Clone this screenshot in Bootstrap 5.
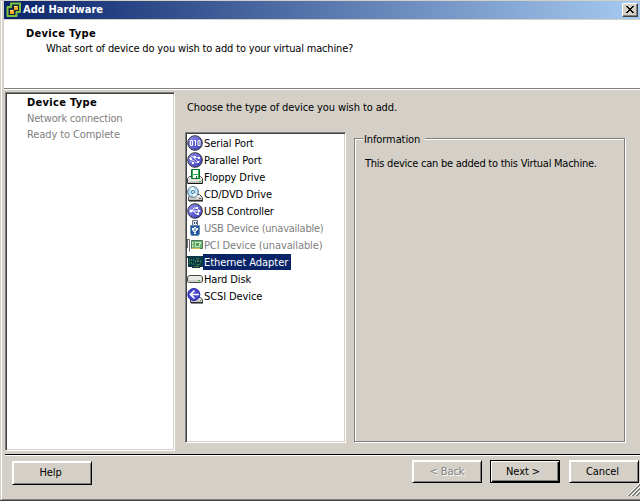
<!DOCTYPE html>
<html lang="en">
<head>
<meta charset="utf-8">
<title>Add Hardware</title>
<link href="https://cdn.jsdelivr.net/npm/bootstrap@5.3.0/dist/css/bootstrap.min.css" rel="stylesheet">
<style>
:root{--face:#d4d0c8}
body{width:640px;height:501px;overflow:hidden;background:var(--face);color:#000;font:11px/16px "DejaVu Sans Condensed","DejaVu Sans",sans-serif;font-stretch:condensed;letter-spacing:-.1px}
svg{display:block;flex:none}
.fit{white-space:pre}
.window{width:640px;height:501px;padding:1px 0 0 1px;border-bottom:1px solid #404040}
.window-inner{border-left:1px solid #fff;border-bottom:1px solid #808080;padding-left:2px;height:499px}
.titlebar{height:18px;background:linear-gradient(90deg,#0a246a,#a6caf0);color:#fff;padding:0 2px 0 2px}
.titlebar .bold{padding-left:1px;letter-spacing:.04px}
.bold{font-weight:700}
#head,#s1{letter-spacing:.32px}
#sub{letter-spacing:-.17px}
#s2{letter-spacing:-.2px}
#msg,#d6{letter-spacing:-.25px}
#d5{letter-spacing:-.17px}
.close-btn{width:16px;height:14px;padding:0;background:var(--face);border:1px solid;border-color:#fff #404040 #404040 #fff;box-shadow:inset -1px -1px #808080;border-radius:0}
.banner{height:69px;background:#fff;border-bottom:1px solid #808080;margin-top:1px;padding:6px 0 0 22px}
.sub{padding-left:20px;margin-top:-1px}
.main{height:365px;border-top:1px solid #fff;padding:2px 14px 0 1px}
.sunken{background:#fff;border:1px solid;border-color:#808080 #fff #fff #808080;box-shadow:inset 1px 1px #404040,inset -1px -1px var(--face)}
.steps{width:170px;height:359px;padding:2px 0 0 21px;color:#808080}
.content{margin-left:10px;padding-top:8px;width:441px}
.prompt{padding-left:2px;height:32px}
.devices{width:161px;height:311px;padding:2px 1px}
.device{height:17px}
.device span{height:16px;line-height:17px;padding:0 1px}
.device .off{color:#808080}
.device .on{background:#0a246a;color:#fff;padding-right:3px;letter-spacing:-.05px}
.group{width:271px;height:304px;margin:6px 0 0 8px;border:1px solid #808080;box-shadow:inset 1px 1px #fff,1px 1px #fff;padding:0 10px}
.group-title{background:var(--face);width:62px;margin:-7px 0 0 -2px;padding-left:1px}
.group-text{margin-top:8px;white-space:nowrap}
.footer-bar{border-top:1px solid #000;box-shadow:inset 0 1px #fff;height:44px;margin-left:1px;padding:5px 1px 0 7px}
.push{width:70px;height:23px;padding:0;font-size:11px;line-height:20px;letter-spacing:inherit;color:#000;background:var(--face);border:1px solid;border-color:#fff #000 #000 #fff;box-shadow:inset 1px 1px #fff,inset -1px -1px #808080;border-radius:0}
.push.help{width:80px;height:24px;margin-top:1px;padding:0 3px 0 0}
.push.default{border-color:#000;box-shadow:inset 1px 1px #fff,inset -1px -1px #000,inset -2px -2px #808080;margin:0 9px 0 8px;padding-right:4px}
.push.push-end{padding-right:3px}
.push.idle{color:#808080;text-shadow:1px 1px #fff}
.grip{position:absolute;right:0;bottom:4px}
</style>
</head>
<body>
<svg width="0" height="0" class="position-absolute"><defs>
<linearGradient id="ball" x1="0" y1="0" x2="1" y2="1"><stop stop-color="#9494f0"/><stop offset="1" stop-color="#3535b8"/></linearGradient>
<linearGradient id="metal" x1="0" y1="0" x2="0" y2="1"><stop stop-color="#fff"/><stop offset="1" stop-color="#b5b5ad"/></linearGradient>
</defs></svg>
<div class="window position-relative">
<div class="window-inner">
<div class="titlebar d-flex align-items-center">
<svg width="16" height="16"><path d="M5 1.500h9v8.500h-3.500v4h-9v-9h3.500z" fill="#102840" stroke="#7cc142" stroke-width="2" stroke-linejoin="round"/><path d="M8 4h4v4H9v3H5v2H3V8h4V5z" fill="#102038"/><path d="M8 4h4v4H8zM4 8h4v4H4z" fill="#f5a728"/><path d="M8 4h3v1H8zM4 8h3v1H4z" fill="#ffe18b"/></svg>
<span class="fit bold" id="title">Add Hardware</span>
<button class="btn close-btn ms-auto" aria-label="Close"><svg width="14" height="12" shape-rendering="crispEdges"><path d="M3 2h2v1h1v1h2v-1h1v-1h2v1h-1v1h-1v1h-1v1h1v1h1v1h1v1h-2v-1h-1v-1h-2v1h-1v1h-2v-1h1v-1h1v-1h1v-1h-1v-1h-1v-1h-1z"/></svg></button>
</div>
<header class="banner"><div><span class="fit bold" id="head">Device Type</span></div><div class="sub"><span class="fit" id="sub">What sort of device do you wish to add to your virtual machine?</span></div></header>
<main class="main d-flex">
<nav class="sunken steps d-flex flex-column align-items-start"><span class="fit bold text-black" id="s1">Device Type</span><span class="fit" id="s2">Network connection</span><span class="fit" id="s3">Ready to Complete</span></nav>
<section class="content">
<div class="prompt"><span class="fit" id="prompt">Choose the type of device you wish to add.</span></div>
<div class="d-flex panels">
<div class="sunken devices">
<div class="device d-flex"><svg width="16" height="16"><circle cx="8" cy="8" r="7.300" fill="url(#ball)" stroke="#333"/><path d="M3.500 5.500h2v5h-2zM8.500 5v6M7 5.500h1M11.500 5.500h1.500v5h-2v-5z" fill="none" stroke="#fff"/></svg><span class="fit" id="d1">Serial Port</span></div>
<div class="device d-flex"><svg width="16" height="16"><circle cx="8" cy="8" r="7.300" fill="url(#ball)" stroke="#333"/><path d="M2 7l3-3 3 2 4-1M3 10l3-2 3 3 4-2M5 4l5 5" fill="none" stroke="#dadaff" stroke-width=".8"/><path d="M3 6h2v2H3zM7 4h2v2H7zM11 5h2v2h-2zM5 10h2v2H5zM10 9h2v2h-2z" fill="#fff"/></svg><span class="fit" id="d2">Parallel Port</span></div>
<div class="device d-flex"><svg width="16" height="16"><path d="M2.500 7.500h11l2 2v5H.5v-5z" fill="url(#metal)" stroke="#444"/><path d="M1 14.500h14.500" stroke="#111"/><path d="M4.500.5h8v9h-8z" fill="#32b34f" stroke="#087125"/><path d="M6 1h5v4H6zM6 6h5v3H6z" fill="#fff"/><path d="M9 7h1v2H9z" fill="#087125"/><path d="M2 11h12v1H2z" fill="#eee"/><path d="M12 12h2v1h-2z" fill="#2abf45"/></svg><span class="fit" id="d3">Floppy Drive</span></div>
<div class="device d-flex"><svg width="16" height="16"><path d="M3.500 8.500h9l3 3v3H1.500v-3z" fill="url(#metal)" stroke="#444"/><path d="M2 15h14" stroke="#111"/><circle cx="6" cy="6" r="5.400" fill="#b7ddf2" stroke="#4e718b"/><path d="M6 6L3 2q2-1 4-.5zM6 6l4 3q-2 2-4 1.500z" fill="#fff"/><circle cx="6" cy="6" r="1.500" fill="#fff" stroke="#397ba5"/><path d="M12 12h2v1h-2z" fill="#555"/></svg><span class="fit" id="d4">CD/DVD Drive</span></div>
<div class="device d-flex"><svg width="16" height="16"><circle cx="8" cy="8" r="7.300" fill="url(#ball)" stroke="#333"/><path d="M3 8h10M5 8l2-3h3M7 8l2 3h2" fill="none" stroke="#fff"/><circle cx="4" cy="8" r="1.500" fill="#fff"/><path d="M9 4h2v2H9zM10 10h2v2h-2zM11 6l3 2-3 2z" fill="#fff"/></svg><span class="fit" id="d5">USB Controller</span></div>
<div class="device d-flex"><svg width="16" height="16"><path d="M5.500.5h5v5h-5z" fill="#e1e5ed" stroke="#65768a"/><path d="M7 2h1v2H7zM9 2h1v2H9z" fill="#38516b"/><path d="M3.500 5.500h9v8l-1 2h-7l-1-2z" fill="#245ba0" stroke="#6688ad"/><path d="M8 7v7M6 9v2l2 1 2-2V8" fill="none" stroke="#fff"/><path d="M7 7h2v1H7zM5 8h2v2H5zM9 8h2v2H9zM7 13h2v1H7z" fill="#fff"/></svg><span class="fit off" id="d6">USB Device (unavailable)</span></div>
<div class="device d-flex"><svg width="16" height="16"><path d="M0 2.500h2.500v12M.5 3v8" fill="none" stroke="#666"/><path d="M4.500 3.500h11v8h-11z" fill="#6cb474" stroke="#4c765a"/><path d="M8 5h5v5H8z" fill="#c0e4b8"/><path d="M9 6h3v3H9z" fill="#559a5c"/><path d="M5 5h1v2H5zM5 8h1v2H5zM13 5h1v2h-1z" fill="#e7eec0"/><path d="M5 11h8v1H5z" fill="#d1bd55"/></svg><span class="fit off" id="d7">PCI Device (unavailable)</span></div>
<div class="device d-flex"><svg width="16" height="16"><path d="M0 2h16v11h-3v1H5v-1H1V4H0z" fill="#0b3846"/><path d="M2 5h1v2H2zM4 5h1v2H4zM6 5h1v2H6zM2 8h1v2H2zM4 8h1v2H4zM6 9h1v2H6zM9 4h3v1H9zM8 6h1v3H8zM13 6h1v3h-1zM9 10h4v1H9z" fill="#2b7b50"/><path d="M10 6h2v2h-2zM7 12h5v1H7z" fill="#66713b"/></svg><span class="fit on" id="d8">Ethernet Adapter</span></div>
<div class="device d-flex"><svg width="16" height="16"><path d="M3 4.500h10q2 0 2.500 2v4q-.5 1-2 1h-11q-1.500 0-2-1v-4q.5-2 2.500-2z" fill="#d0d0ca" stroke="#444"/><path d="M2 6h12M2 8h12" stroke="#fff"/><path d="M11 9h2v1h-2z" fill="#34af40"/></svg><span class="fit" id="d9">Hard Disk</span></div>
<div class="device d-flex"><svg width="16" height="16"><path d="M5 9.500h8l2.500 2v3h-12v-3z" fill="url(#metal)" stroke="#444"/><path d="M4 15h12" stroke="#111"/><circle cx="6.800" cy="6.500" r="6" fill="#4848cc" stroke="#2323a0"/><path d="M7.500 2.500l-4 4 4 4M4 6.500h8" fill="none" stroke="#fff" stroke-width="1.700"/><path d="M13 12h1v1h-1z" fill="#2dab3a"/></svg><span class="fit" id="d10">SCSI Device</span></div>
</div>
<section class="group"><div class="group-title"><span class="fit" id="info">Information</span></div><div class="group-text"><span class="fit" id="msg">This device can be added to this Virtual Machine.</span></div></section>
</div>
</section>
</main>
<footer class="footer-bar d-flex align-items-start">
<button class="btn push help me-auto">Help</button><button class="btn push idle">&lt; Back</button><button class="btn push default">Next &gt;</button><button class="btn push push-end">Cancel</button>
</footer>
</div>
<svg class="grip" width="13" height="13" viewBox="0 0 13 13"><path d="M0 13L13 0M4 13l9-9M8 13l5-5" stroke="#fff"/><path d="M1 13L13 1M2 13L13 2M5 13l8-8M6 13l7-7M9 13l4-4M10 13l3-3" stroke="#808080"/></svg>
</div>
<script src="https://cdn.jsdelivr.net/npm/bootstrap@5.3.0/dist/js/bootstrap.bundle.min.js"></script>
</body>
</html>
